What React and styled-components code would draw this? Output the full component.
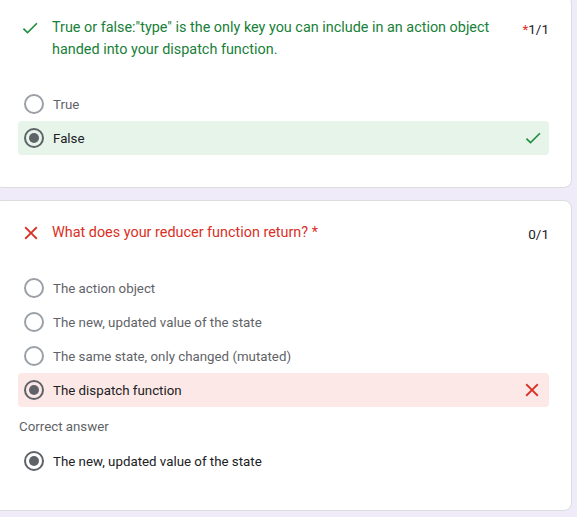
import React from 'react';
import styled, { createGlobalStyle } from 'styled-components';

const GlobalStyle = createGlobalStyle`
  html, body {
    margin: 0;
    padding: 0;
    background: #f0ebf8;
    font-family: Roboto, "Liberation Sans", Arial, sans-serif;
  }
`;

const Page = styled.div`
  display: flex;
  flex-direction: column;
  gap: 12px;
  margin-top: -5px;
  margin-left: -6px;
  width: 578px;
`;

const Card = styled.div`
  background: #fff;
  border: 1px solid #dadce0;
  border-radius: 8px;
  padding: 21px 22px 32px 23px;
`;

const Header = styled.div`
  display: flex;
  align-items: flex-start;
  margin-bottom: 26px;
`;

const StatusIcon = styled.span`
  flex: 0 0 auto;
  width: 34px;
  height: 22px;
  display: flex;
  align-items: center;
  padding-left: 2px;
  box-sizing: border-box;
  svg {
    display: block;
  }
`;

const Title = styled.div`
  flex: 1;
  font-size: 14.4px;
  line-height: 22px;
  color: ${p => (p.$ok ? '#188038' : '#d93025')};
  padding-right: 20px;
`;

const Score = styled.div`
  flex: 0 0 auto;
  font-size: 13.5px;
  line-height: 22px;
  color: #202124;
  padding-top: 1px;

  span {
    color: #d93025;
  }
`;

const OptionRow = styled.div`
  display: flex;
  align-items: center;
  height: 34px;
  padding: 0 6px 0 6px;
  border-radius: 4px;
  background: ${p => p.$bg || 'transparent'};
`;

const Radio = styled.span`
  width: 20px;
  height: 20px;
  box-sizing: border-box;
  border-radius: 50%;
  border: 2px solid ${p => (p.$checked ? '#5f6368' : '#9aa0a6')};
  display: flex;
  align-items: center;
  justify-content: center;
  margin-right: 9px;
  flex: 0 0 auto;

  &::after {
    content: '';
    display: ${p => (p.$checked ? 'block' : 'none')};
    width: 10px;
    height: 10px;
    border-radius: 50%;
    background: #5f6368;
  }
`;

const OptionLabel = styled.span`
  flex: 1;
  font-size: 13.3px;
  color: ${p => (p.$checked ? '#202124' : '#5f6368')};
`;

const Mark = styled.span`
  display: flex;
  align-items: center;
`;

const CorrectLabel = styled.div`
  font-size: 13.3px;
  line-height: 20px;
  color: #5f6368;
  margin: 10px 0 7px 1px;
`;

const CheckIcon = ({ size = 18, color = '#1e8e3e' }) => (
  <svg width={size} height={size} viewBox="0 0 24 24" fill={color}>
    <path d="M9 16.17L4.83 12l-1.42 1.41L9 19 21 7l-1.41-1.41z" />
  </svg>
);

const CloseIcon = ({ size = 22, color = '#d93025' }) => (
  <svg width={size} height={size} viewBox="0 0 24 24" fill={color}>
    <path d="M19 6.41L17.59 5 12 10.59 6.41 5 5 6.41 10.59 12 5 17.59 6.41 19 12 13.41 17.59 19 19 17.59 13.41 12z" />
  </svg>
);

const Option = ({ label, checked, status }) => {
  const bg = status === 'ok' ? '#e6f4ea' : status === 'bad' ? '#fce8e6' : null;
  return (
    <OptionRow $bg={bg}>
      <Radio $checked={checked} />
      <OptionLabel $checked={checked}>{label}</OptionLabel>
      {status === 'ok' && <Mark><CheckIcon size={20} /></Mark>}
      {status === 'bad' && <Mark><CloseIcon size={22} /></Mark>}
    </OptionRow>
  );
};

export default function App() {
  return (
    <>
      <GlobalStyle />
      <Page>
        <Card>
          <Header>
            <StatusIcon><CheckIcon size={20} /></StatusIcon>
            <Title $ok>
              True or false:"type" is the only key you can include in an action object handed into your dispatch function.
            </Title>
            <Score><span>*</span>1/1</Score>
          </Header>
          <Option label="True" />
          <Option label="False" checked status="ok" />
        </Card>

        <Card>
          <Header>
            <StatusIcon><CloseIcon size={22} /></StatusIcon>
            <Title>What does your reducer function return? *</Title>
            <Score>0/1</Score>
          </Header>
          <Option label="The action object" />
          <Option label="The new, updated value of the state" />
          <Option label="The same state, only changed (mutated)" />
          <Option label="The dispatch function" checked status="bad" />
          <CorrectLabel>Correct answer</CorrectLabel>
          <Option label="The new, updated value of the state" checked />
        </Card>
      </Page>
    </>
  );
}
